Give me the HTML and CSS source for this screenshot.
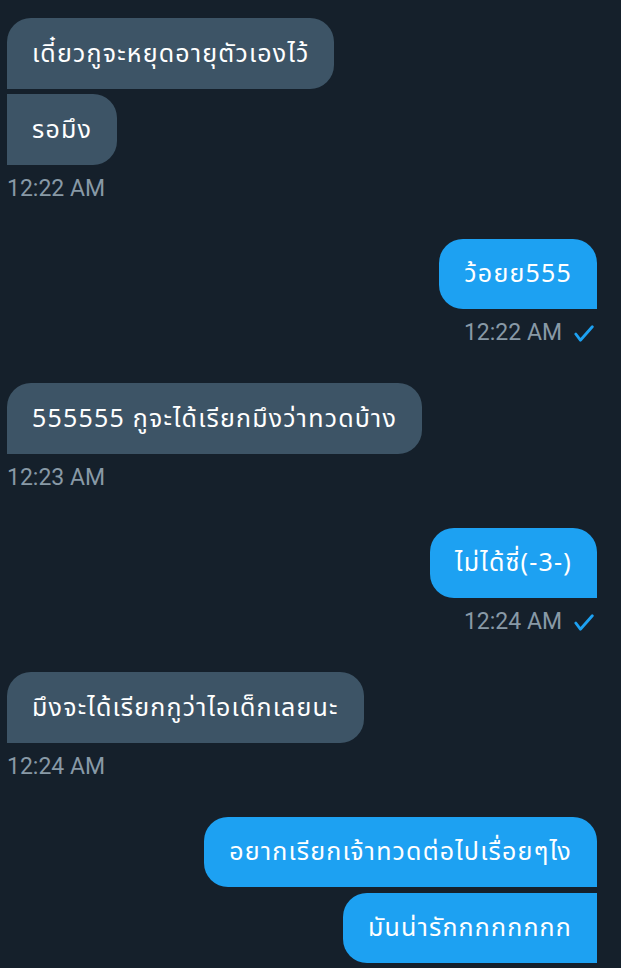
FILE: index.html
```html
<!DOCTYPE html>
<html lang="th">
<head>
    <meta charset="UTF-8">
    <meta name="viewport" content="width=device-width, initial-scale=1.0">
    <title>Messages</title>
    <link rel="stylesheet" href="styles.css">
</head>
<body>

    <div class="chat">

        <div class="group received">
            <div class="bubble first">เดี๋ยวกูจะหยุดอายุตัวเองไว้</div>
            <div class="bubble">รอมึง</div>
            <div class="time">12:22 AM</div>
        </div>

        <div class="group sent">
            <div class="bubble first">ว้อยย555</div>
            <div class="time">12:22 AM
                <svg class="check" viewBox="0 0 20 17"><path d="M1.8 9l4.6 6.2L18.3 1.8"/></svg>
            </div>
        </div>

        <div class="group received">
            <div class="bubble first">555555 กูจะได้เรียกมึงว่าทวดบ้าง</div>
            <div class="time">12:23 AM</div>
        </div>

        <div class="group sent">
            <div class="bubble first">ไม่ได้ซี่(-3-)</div>
            <div class="time">12:24 AM
                <svg class="check" viewBox="0 0 20 17"><path d="M1.8 9l4.6 6.2L18.3 1.8"/></svg>
            </div>
        </div>

        <div class="group received">
            <div class="bubble first">มึงจะได้เรียกกูว่าไอเด็กเลยนะ</div>
            <div class="time">12:24 AM</div>
        </div>

        <div class="group sent">
            <div class="bubble first">อยากเรียกเจ้าทวดต่อไปเรื่อยๆไง</div>
            <div class="bubble">มันน่ารักกกกกกกก</div>
        </div>

    </div>

</body>
</html>
```

FILE: styles.css
```css
body {
    margin: 0;
    padding: 0;
    background-color: #15202b;
    font-family: "Noto Sans Thai", "Noto Sans", Roboto, sans-serif;
    overflow: hidden;
}
.chat {
    padding: 18px 24px 0 7px;
    display: flex;
    flex-direction: column;
    gap: 38px;
}
.group {
    display: flex;
    flex-direction: column;
    gap: 5px;
}
.received {
    align-items: flex-start;
}
.sent {
    align-items: flex-end;
    gap: 6px;
}
.bubble {
    box-sizing: border-box;
    height: 71px;
    padding: 0 25px;
    display: flex;
    align-items: center;
    font-size: 25px;
    letter-spacing: 1.2px;
    color: #fff;
    white-space: nowrap;
}
.received .bubble {
    background-color: #3d5466;
    border-radius: 0 24px 24px 0;
}
.received .bubble.first {
    border-radius: 24px 24px 24px 0;
}
.sent .bubble {
    height: 70px;
    background-color: #1da1f2;
    border-radius: 24px 0 0 24px;
}
.sent .bubble.first {
    border-radius: 24px 24px 0 24px;
}
.time {
    margin-top: 5px;
    height: 26px;
    display: flex;
    align-items: center;
    gap: 12px;
    font-family: Roboto, sans-serif;
    font-size: 23px;
    color: #8899a6;
}
.sent .time {
    margin-top: 4px;
    margin-right: 3px;
}
.check {
    width: 20px;
    height: 17px;
    margin-top: 3px;
    fill: none;
    stroke: #1da1f2;
    stroke-width: 2.8;
    stroke-linecap: round;
    stroke-linejoin: round;
}
```
